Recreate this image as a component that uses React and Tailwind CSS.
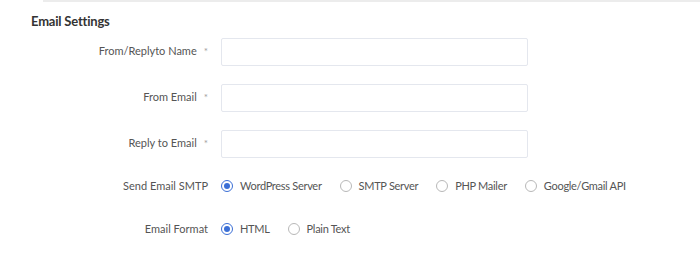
import React from "react";

function Radio({ label, checked }) {
  return (
    <label className="flex items-center gap-[7px]">
      <span
        className={
          "flex h-[12px] w-[12px] items-center justify-center rounded-full border " +
          (checked ? "border-[#3b6fd6] border-[1.5px]" : "border-[#b8b8b8]")
        }
      >
        {checked && <span className="h-[6px] w-[6px] rounded-full bg-[#3b6fd6]" />}
      </span>
      <span className="tracking-[-0.3px]">{label}</span>
    </label>
  );
}

function Row({ label, required, children }) {
  return (
    <div className="flex items-center">
      <div className="w-[209px] pr-[1px] text-right">
        {label}
        {required && <span className="ml-[7px] text-[10px] text-[#a0a0a0]">*</span>}
      </div>
      <div className="ml-[12px]">{children}</div>
    </div>
  );
}

export default function App() {
  return (
    <div
      className="h-[264px] w-[700px] bg-white text-[11px] text-[#555]"
      style={{ fontFamily: "Lato, 'Noto Sans', sans-serif" }}
    >
      <div className="ml-[43px] h-[2px] border-t-2 border-[#ececec]" />
      <div className="pl-[31px] pt-[10px] text-[13px] font-bold tracking-[-0.2px] text-[#333]">
        Email Settings
      </div>
      <div className="mt-[6px] flex flex-col gap-[18px]">
        <Row label="From/Replyto Name" required>
          <div className="h-[28px] w-[307px] rounded-[2px] border border-[#e4e7ee]" />
        </Row>
        <Row label="From Email" required>
          <div className="h-[28px] w-[307px] rounded-[2px] border border-[#e4e7ee]" />
        </Row>
        <Row label="Reply to Email" required>
          <div className="h-[28px] w-[307px] rounded-[2px] border border-[#e4e7ee]" />
        </Row>
      </div>
      <div className="mt-[20px] flex flex-col gap-[27px]">
        <Row label="Send Email SMTP">
          <div className="flex items-center gap-[18px]">
            <Radio label="WordPress Server" checked />
            <Radio label="SMTP Server" />
            <Radio label="PHP Mailer" />
            <Radio label="Google/Gmail API" />
          </div>
        </Row>
        <Row label="Email Format">
          <div className="flex items-center gap-[18px]">
            <Radio label="HTML" checked />
            <Radio label="Plain Text" />
          </div>
        </Row>
      </div>
    </div>
  );
}
